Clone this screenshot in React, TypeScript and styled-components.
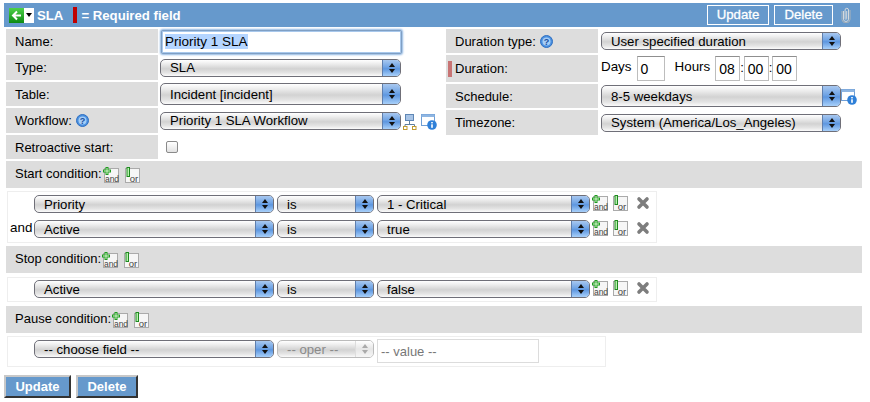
import React from "react"
import styled, { createGlobalStyle } from "styled-components"

const GlobalStyle = createGlobalStyle`
  html, body {
    margin: 0;
    padding: 0;
    background: #fff;
    font-family: "Liberation Sans", Arial, sans-serif;
    font-size: 13px;
    color: #000;
  }
`

function BackIcon() {
  return (
    <svg width="15" height="15" viewBox="0 0 15 15">
      <defs>
        <linearGradient id="bk" x1="0" y1="0" x2="0" y2="1">
          <stop offset="0" stopColor="#4fd14a" />
          <stop offset="1" stopColor="#0c8a12" />
        </linearGradient>
      </defs>
      <rect width="15" height="15" fill="url(#bk)" />
      <path d="M12 7.5H4.5M8 3.5l-4 4 4 4" fill="none" stroke="#fff" strokeWidth="2" />
    </svg>
  )
}

function ClipIcon() {
  return (
    <svg width="10" height="16" viewBox="0 0 10 16">
      <path
        d="M2.5 4v8a2.5 2.5 0 0 0 5 0V3a1.7 1.7 0 0 0-3.4 0v8.500a.8.8 0 0 0 1.600 0V4"
        fill="none"
        stroke="#d5d9dc"
        strokeWidth="1"
      />
      <path d="M1 4v8.500a4 3.200 0 0 0 8 0V3" fill="none" stroke="#a9b3ba" strokeWidth="1" />
    </svg>
  )
}

function HelpIcon() {
  return (
    <svg width="13" height="13" viewBox="0 0 13 13">
      <circle cx="6.500" cy="6.500" r="6" fill="#4a90e0" stroke="#2f6fc0" />
      <circle cx="6.500" cy="6.500" r="4" fill="#a5cdf5" />
      <text x="6.500" y="10" textAnchor="middle" fontSize="9" fontWeight="700" fill="#1a4fa0">
        ?
      </text>
    </svg>
  )
}

function TreeIcon() {
  return (
    <svg width="14" height="16" viewBox="0 0 14 16">
      <rect x="2.500" y="0.500" width="8" height="6" fill="#a8c4e6" stroke="#5f87b5" />
      <path d="M6.500 7v3M2 10.500H11.500M2 10.500v2M11.500 10.500v2" stroke="#5f7f9f" fill="none" />
      <rect x="0.500" y="12.500" width="3.500" height="3" fill="#fff" stroke="#c09a30" />
      <rect x="9.500" y="12.500" width="3.500" height="3" fill="#fff" stroke="#c09a30" />
    </svg>
  )
}

function InfoWindowIcon() {
  return (
    <svg width="16" height="16" viewBox="0 0 16 16">
      <rect x="0.500" y="0.500" width="13" height="11" fill="#fff" stroke="#6f9fd6" />
      <rect x="0.500" y="0.500" width="13" height="2.500" fill="#8fb6e2" />
      <circle cx="11" cy="11" r="4.800" fill="#2f80d8" />
      <rect x="10.200" y="10.300" width="1.600" height="3.500" fill="#fff" />
      <rect x="10.200" y="8" width="1.600" height="1.400" fill="#fff" />
    </svg>
  )
}

function AndIcon() {
  return (
    <svg width="16" height="16" viewBox="0 0 16 16" overflow="visible">
      <rect x="1.500" y="1.500" width="14" height="14" fill="#f6f6f6" stroke="#aaa" />
      <path d="M4 0v8M0 4h8" stroke="#1f9a1f" strokeWidth="3" />
      <path d="M4 1v6M1 4h6" stroke="#d8f8d0" strokeWidth="1" />
      <text x="9" y="14.500" textAnchor="middle" fontSize="8.500" fill="#444">
        and
      </text>
    </svg>
  )
}

function OrIcon() {
  return (
    <svg width="15" height="16" viewBox="0 0 15 16" overflow="visible">
      <rect x="0.500" y="1.500" width="14" height="14" fill="#f6f6f6" stroke="#aaa" />
      <rect x="2" y="0.500" width="2.500" height="9" fill="#b8f0b0" stroke="#1d8a1d" />
      <text x="9" y="14.500" textAnchor="middle" fontSize="9.500" fill="#444">
        or
      </text>
    </svg>
  )
}

function CloseIcon() {
  return (
    <svg width="14" height="14" viewBox="0 0 14 14">
      <path d="M3 3l8 8M11 3l-8 8" stroke="#7d7d7d" strokeWidth="3.600" strokeLinecap="round" />
    </svg>
  )
}

function Select({
  value,
  width,
  height = 18,
  disabled,
}: {
  value: string
  width: number
  height?: number
  disabled?: boolean
}) {
  return (
    <SelectBox $width={width} $height={height} $disabled={disabled}>
      <SelectText>{value}</SelectText>
      <SelectArrows $disabled={disabled}>
        <ArrowUp $disabled={disabled} />
        <ArrowDown $disabled={disabled} />
      </SelectArrows>
    </SelectBox>
  )
}

function Condition({
  prefix,
  field,
  value,
}: {
  prefix?: string
  field: string
  value: string
}) {
  return (
    <ConditionRow>
      <Prefix>{prefix}</Prefix>
      <Select value={field} width={240} />
      <Select value="is" width={97} />
      <Select value={value} width={213} />
      <ConditionIcons>
        <AndIcon />
        <OrIcon />
        <CloseSlot>
          <CloseIcon />
        </CloseSlot>
      </ConditionIcons>
    </ConditionRow>
  )
}

function ConditionTitle({ children }: { children: string }) {
  return (
    <SectionBar>
      <span>{children}</span>
      <AndSpacer>
        <AndIcon />
      </AndSpacer>
      <OrSpacer>
        <OrIcon />
      </OrSpacer>
    </SectionBar>
  )
}

export default function App() {
  return (
    <Page>
      <GlobalStyle />
      <Header>
        <HeaderLeft>
          <BackMenu>
            <BackIcon />
            <Caret />
          </BackMenu>
          <span>SLA</span>
          <RequiredBar />
          <span>= Required field</span>
        </HeaderLeft>
        <HeaderRight>
          <HeaderButton $width={62}>Update</HeaderButton>
          <HeaderButton $width={59}>Delete</HeaderButton>
          <ClipSlot>
            <ClipIcon />
          </ClipSlot>
        </HeaderRight>
      </Header>

      <Body>
        <Columns>
          <LeftColumn>
            <Row $height={24}>
              <Label>Name:</Label>
              <NameInput>
                <Selected>Priority 1 SLA</Selected>
              </NameInput>
            </Row>
            <Row $height={25}>
              <Label>Type:</Label>
              <Control>
                <Select value="SLA" width={241} />
              </Control>
            </Row>
            <Row $height={24}>
              <Label>Table:</Label>
              <Control>
                <Select value="Incident [incident]" width={241} height={22} />
              </Control>
            </Row>
            <Row $height={25}>
              <Label>
                Workflow: <HelpIcon />
              </Label>
              <Control>
                <Select value="Priority 1 SLA Workflow" width={241} />
                <TreeSlot>
                  <TreeIcon />
                </TreeSlot>
                <InfoSlot>
                  <InfoWindowIcon />
                </InfoSlot>
              </Control>
            </Row>
            <Row $height={24}>
              <Label>Retroactive start:</Label>
              <Control>
                <Checkbox />
              </Control>
            </Row>
          </LeftColumn>

          <RightColumn>
            <Row $height={24}>
              <Label>
                Duration type: <HelpIcon />
              </Label>
              <RightControl>
                <Select value="User specified duration" width={240} />
              </RightControl>
            </Row>
            <Row $height={27}>
              <Label>
                <MandatoryMark />
                Duration:
              </Label>
              <RightControl>
                <DurationText>Days</DurationText>
                <TimeInput $width={28} $left={5}>0</TimeInput>
                <DurationText $left={10}>Hours</DurationText>
                <TimeInput $width={25} $left={5}>08</TimeInput>
                <Colon>:</Colon>
                <TimeInput $width={25}>00</TimeInput>
                <Colon>:</Colon>
                <TimeInput $width={25}>00</TimeInput>
              </RightControl>
            </Row>
            <Row $height={24}>
              <Label>Schedule:</Label>
              <RightControl>
                <Select value="8-5 weekdays" width={240} height={22} />
                <InfoOverlap>
                  <InfoWindowIcon />
                </InfoOverlap>
              </RightControl>
            </Row>
            <Row $height={25}>
              <Label>Timezone:</Label>
              <RightControl>
                <Select value="System (America/Los_Angeles)" width={240} />
              </RightControl>
            </Row>
          </RightColumn>
        </Columns>

        <ConditionTitle>Start condition:</ConditionTitle>
        <ConditionBox $width={650} $top={3} $bottom={3} $padding="3px 0 4px">
          <Condition field="Priority" value="1 - Critical" />
          <Condition prefix="and" field="Active" value="true" />
        </ConditionBox>

        <ConditionTitle>Stop condition:</ConditionTitle>
        <ConditionBox $width={650} $top={4} $bottom={4} $padding="2px 0 3px">
          <Condition field="Active" value="false" />
        </ConditionBox>

        <ConditionTitle>Pause condition:</ConditionTitle>
        <ConditionBox $width={599} $top={3} $bottom={0} $padding="2px 0">
          <PauseRow>
            <Prefix />
            <Select value="-- choose field --" width={240} />
            <Select value="-- oper --" width={97} disabled />
            <ValueInput>-- value --</ValueInput>
          </PauseRow>
        </ConditionBox>
      </Body>

      <Footer>
        <FooterButton $width={67}>Update</FooterButton>
        <FooterButton $width={62}>Delete</FooterButton>
      </Footer>
    </Page>
  )
}

const Page = styled.div`
  width: 870px;
  height: 402px;
  box-sizing: border-box;
  padding: 3px 0 0 4px;
  overflow: hidden;
`

const Header = styled.div`
  width: 856px;
  height: 24px;
  background: #6699cc;
  display: flex;
  justify-content: space-between;
  align-items: center;
  color: #fff;
  font-weight: 700;
  font-size: 13.2px;
`

const HeaderLeft = styled.div`
  display: flex;
  align-items: center;
  padding-left: 5px;
`

const BackMenu = styled.div`
  display: flex;
  align-items: center;
  background: #fff;
  width: 25px;
  height: 15px;
  margin-right: 3px;
`

const Caret = styled.div`
  margin-left: 2px;
  width: 0;
  height: 0;
  border-left: 3px solid transparent;
  border-right: 3px solid transparent;
  border-top: 4px solid #000;
`

const RequiredBar = styled.div`
  width: 4px;
  height: 16px;
  background: #c00000;
  margin: 0 4px 0 10px;
`

const HeaderRight = styled.div`
  display: flex;
  align-items: center;
  height: 100%;
`

const HeaderButton = styled.div<{ $width: number }>`
  box-sizing: border-box;
  width: ${(p) => p.$width}px;
  height: 20px;
  line-height: 18px;
  text-align: center;
  margin-left: 5px;
  border: 1px solid #fff;
  font-weight: 400;
  font-size: 13.2px;
  -webkit-text-stroke: 0.3px #fff;
`

const ClipSlot = styled.div`
  display: flex;
  margin: 0 9px 0 8px;
`

const Body = styled.div`
  margin-left: 2px;
`

const Columns = styled.div`
  display: flex;
  margin-top: 2px;
`

const LeftColumn = styled.div`
  width: 440px;
  display: flex;
  flex-direction: column;
  gap: 2px;
`

const RightColumn = styled.div`
  width: 400px;
  display: flex;
  flex-direction: column;
  gap: 2px;
`

const Row = styled.div<{ $height: number }>`
  display: flex;
  height: ${(p) => p.$height}px;
`

const Label = styled.div`
  box-sizing: border-box;
  width: 152px;
  flex: none;
  background: #dddddd;
  display: flex;
  align-items: center;
  gap: 4px;
  padding-left: 9px;
  position: relative;
`

const MandatoryMark = styled.span`
  position: absolute;
  left: 2px;
  top: 6px;
  width: 4px;
  height: 16px;
  background: #c87474;
`

const Control = styled.div`
  display: flex;
  align-items: center;
  padding-left: 2px;
`

const RightControl = styled.div`
  display: flex;
  align-items: center;
  padding-left: 3px;
`

const NameInput = styled.div`
  box-sizing: border-box;
  margin-left: 3px;
  margin-top: 1px;
  width: 241px;
  height: 24px;
  border: 1px solid #7f9fc4;
  box-shadow: inset 0 0 0 1px #a8c8ec, 0 0 2px 1px #8fb6e2;
  border-radius: 2px;
  padding-left: 3px;
  line-height: 21px;
  font-size: 13.5px;
  background: #fff;
`

const Selected = styled.span`
  background: #b5d5ff;
`

const SelectBox = styled.div<{ $width: number; $height: number; $disabled?: boolean }>`
  box-sizing: border-box;
  flex: none;
  width: ${(p) => p.$width}px;
  height: ${(p) => p.$height}px;
  border: 1px solid ${(p) => (p.$disabled ? "#bbb" : "#6f6f78")};
  border-radius: 5px;
  overflow: hidden;
  display: flex;
  align-items: center;
  justify-content: space-between;
  color: ${(p) => (p.$disabled ? "#8a8a8a" : "#000")};
  background: linear-gradient(#ffffff 0%, #ececec 25%, #d2d2d2 55%, #e4e4e4 80%, #fbfbfb 100%);
`

const SelectText = styled.span`
  padding-left: 9px;
  white-space: nowrap;
  font-size: 13.2px;
`

const SelectArrows = styled.div<{ $disabled?: boolean }>`
  width: 17px;
  height: 100%;
  flex: none;
  display: flex;
  flex-direction: column;
  align-items: center;
  justify-content: center;
  gap: 2px;
  background: ${(p) =>
    p.$disabled
      ? "linear-gradient(#fff, #e6e6e6 50%, #f6f6f6)"
      : "linear-gradient(#a8c8f0 0%, #6fa3e4 45%, #5d96df 55%, #a8d0fa 100%)"};
  border-left: 1px solid ${(p) => (p.$disabled ? "#ddd" : "#5f7fae")};
`

const ArrowUp = styled.div<{ $disabled?: boolean }>`
  width: 0;
  height: 0;
  border-left: 3px solid transparent;
  border-right: 3px solid transparent;
  border-bottom: 4px solid ${(p) => (p.$disabled ? "#aaa" : "#111")};
`

const ArrowDown = styled.div<{ $disabled?: boolean }>`
  width: 0;
  height: 0;
  border-left: 3px solid transparent;
  border-right: 3px solid transparent;
  border-top: 4px solid ${(p) => (p.$disabled ? "#aaa" : "#111")};
`

const TreeSlot = styled.div`
  display: flex;
  margin-left: 2px;
  margin-top: 2px;
`

const InfoSlot = styled.div`
  display: flex;
  margin-left: 4px;
  margin-top: 2px;
`

const InfoOverlap = styled.div`
  display: flex;
  margin-top: 2px;
`

const Checkbox = styled.div`
  box-sizing: border-box;
  width: 12px;
  height: 12px;
  margin-left: 6px;
  border: 1px solid #8a8a8a;
  border-radius: 2px;
  background: linear-gradient(#fff, #e2e2e2);
`

const DurationText = styled.span<{ $left?: number }>`
  margin-left: ${(p) => p.$left ?? 0}px;
  margin-top: -4px;
  font-size: 13.4px;
`

const TimeInput = styled.div<{ $width: number; $left?: number }>`
  box-sizing: border-box;
  width: ${(p) => p.$width}px;
  height: 25px;
  margin-left: ${(p) => p.$left ?? 0}px;
  border: 1px solid #bdbdbd;
  border-top-color: #8f8f8f;
  padding-left: 3px;
  line-height: 25px;
  font-size: 14px;
`

const Colon = styled.span`
  width: 3.5px;
  text-align: center;
  margin-top: -3px;
`

const SectionBar = styled.div`
  box-sizing: border-box;
  width: 856px;
  height: 27px;
  margin-top: 2px;
  background: #dddddd;
  padding-left: 9px;
  display: flex;
  align-items: center;
  padding-bottom: 2px;
`

const AndSpacer = styled.span`
  display: flex;
  margin-left: 1px;
  margin-top: 3px;
`

const OrSpacer = styled.span`
  display: flex;
  margin-left: 6px;
  margin-top: 3px;
`

const ConditionBox = styled.div<{ $width: number; $top: number; $bottom: number; $padding: string }>`
  box-sizing: border-box;
  width: ${(p) => p.$width}px;
  margin: ${(p) => p.$top}px 0 ${(p) => p.$bottom}px 1px;
  border: 1px solid #eeeeee;
  padding: ${(p) => p.$padding};
  display: flex;
  flex-direction: column;
  gap: 7px;
`

const ConditionRow = styled.div`
  display: flex;
  align-items: center;
  gap: 3px;
  height: 18px;
`

const PauseRow = styled.div`
  display: flex;
  align-items: flex-start;
  gap: 3px;
  height: 24px;
  padding-top: 1px;
`

const Prefix = styled.span`
  width: 23px;
  padding-left: 2px;
  box-sizing: border-box;
  flex: none;
  font-size: 13.4px;
  margin-top: -4px;
`

const ConditionIcons = styled.div`
  display: flex;
  align-items: center;
  gap: 5px;
  margin-left: -1px;
  margin-top: -3px;
`

const CloseSlot = styled.span`
  display: flex;
  margin-left: 3px;
`

const ValueInput = styled.div`
  box-sizing: border-box;
  width: 162px;
  height: 24px;
  margin-top: -1px;
  border: 1px solid #dcdcdc;
  padding-left: 3px;
  line-height: 24px;
  color: #777;
`

const Footer = styled.div`
  display: flex;
  gap: 5px;
  margin-top: 8px;
`

const FooterButton = styled.div<{ $width: number }>`
  box-sizing: border-box;
  width: ${(p) => p.$width}px;
  height: 23px;
  text-align: center;
  background: #6699cc;
  color: #fff;
  font-weight: 700;
  font-size: 13px;
  line-height: 19px;
  border: 2px solid;
  border-color: #c8c8c8 #333 #333 #c8c8c8;
`
